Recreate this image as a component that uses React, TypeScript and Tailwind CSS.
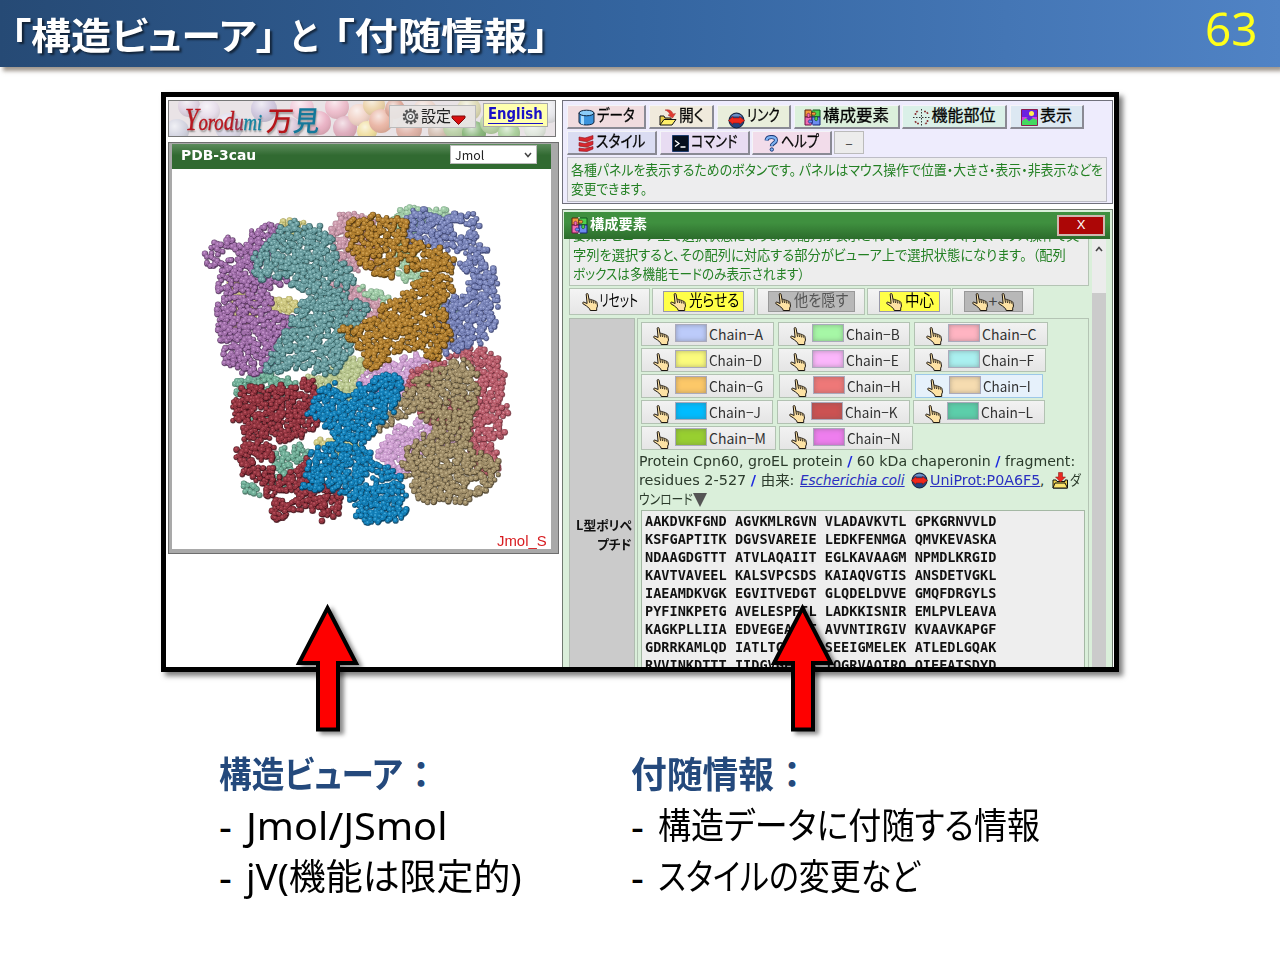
import { useLayoutEffect, useRef, type ReactNode } from "react";

/* Text squeezed or stretched horizontally to fill the width of its box. */
function Fit({ className, children }: { className: string; children: ReactNode }) {
  const box = useRef<HTMLSpanElement>(null);
  const text = useRef<HTMLSpanElement>(null);
  useLayoutEffect(() => {
    if (box.current && text.current) {
      text.current.style.transform = `scaleX(${box.current.clientWidth / text.current.offsetWidth})`;
    }
  });
  return (
    <span ref={box} className={`inline-block shrink-0 whitespace-nowrap ${className}`}>
      <span ref={text} className="inline-block origin-left whitespace-pre">
        {children}
      </span>
    </span>
  );
}

/* ---------- icons ---------- */

function Hand() {
  return (
    <svg width="18" height="18" viewBox="0 0 18 18" className="shrink-0">
      <path
        d="M5.2 1.2c0-.9 1.8-.9 1.9.1l.9 5.3c.4-.7 1.7-.5 2 .3.5-.5 1.7-.3 2 .6.6-.4 1.7 0 2 .8.9-.2 1.6.3 1.9 1.2l.6 3.6-.8 2v2.4H9.2l-.5-1.7-3.2-2.8-3.6-2.3c-.8-.9.2-1.9 1.2-1.5l3 1.3z"
        fill="#fde2a4"
        stroke="#1c1610"
        strokeWidth="1"
      />
      <path d="M8 6.6l.6 3.2M10 7l.5 3M12 7.6l.5 2.8M14 8.6l.4 2" stroke="#1c1610" strokeWidth=".9" fill="none" />
    </svg>
  );
}

function DbIcon() {
  return (
    <svg width="17" height="17" viewBox="0 0 17 17">
      <path d="M1 4v9c0 4 15 4 15 0V4z" fill="#3b93dc" stroke="#10243c" />
      <path d="M3 6v9l3 .8V7z" fill="#a5dcff" />
      <ellipse cx="8.5" cy="4" rx="7.5" ry="2.8" fill="#8accf7" stroke="#10243c" />
    </svg>
  );
}

function OpenIcon() {
  return (
    <svg width="18" height="17" viewBox="0 0 18 17">
      <path d="M1 16V7h4l1 2h6v2" fill="#e8cf4a" stroke="#111" />
      <path d="M1 16l4-5.5h12L13 16z" fill="#fff06a" stroke="#111" />
      <path d="M6 1c5-1 7 1 8 4l2.5-.5-3 4.5-4.5-3 2-.4C10 3 8.500 2 6 1z" fill="#e03a30" stroke="#a33" strokeWidth=".5" />
    </svg>
  );
}

function LinkIcon() {
  return (
    <svg width="17" height="17" viewBox="0 0 17 17" className="inline-block shrink-0">
      <circle cx="8.500" cy="8.500" r="7.500" fill="#24457f" stroke="#101c38" />
      <path d="M3 4.500c3-4 8-3.500 11 0z" fill="#6e8fc4" />
      <path d="M.5 8.500L5 4.500V6h6.500V4.500L16.500 8.500l-5 4V11H5v1.500z" fill="#f0281c" stroke="#8c0d0d" strokeWidth=".5" />
    </svg>
  );
}

function PuzzleIcon() {
  return (
    <svg width="17" height="17" viewBox="0 0 17 17" className="shrink-0">
      <path d="M1 1h7v7H1z" fill="#f39a3d" stroke="#5b2410" />
      <path d="M8 1h8v7H8z" fill="#4ed04e" stroke="#10521e" />
      <path d="M1 8h7v8H1z" fill="#f06bb0" stroke="#6b1444" />
      <path d="M8 8h8v8H8z" fill="#6c8cf0" stroke="#1a2578" />
      <path d="M7.500 3.500h1.500a1.600 1.600 0 1 1 0 2.400H7.500z" fill="#f39a3d" stroke="#5b2410" strokeWidth=".7" />
      <path d="M11 7.500V9a1.600 1.600 0 1 0 2.400 0V7.500z" fill="#4ed04e" stroke="#10521e" strokeWidth=".7" />
      <path d="M3.300 8.500V7a1.600 1.600 0 1 1 2.400 0v1.500z" fill="#f06bb0" stroke="#6b1444" strokeWidth=".7" />
      <path d="M8.500 11.300H7a1.600 1.600 0 1 0 0 2.400h1.500z" fill="#6c8cf0" stroke="#1a2578" strokeWidth=".7" />
      <path d="M7 0h2v1.500H7zM7 15.500h2V17H7z" fill="#fff" fillOpacity=".6" />
    </svg>
  );
}

function SiteIcon() {
  return (
    <svg width="17" height="17" viewBox="0 0 17 17">
      <path d="M8.500 0v17M0 8.500h17" stroke="#333" strokeDasharray="1.500 1.500" />
      <path d="M2.500 6V4L4 2.500h2M11 2.500h2L14.500 4v2M14.500 11v2L13 14.500h-2M6 14.500H4L2.500 13v-2" fill="none" stroke="#8c3a3a" strokeWidth="1.600" strokeDasharray="2 1" />
    </svg>
  );
}

function PictureIcon() {
  return (
    <svg width="17" height="17" viewBox="0 0 17 17">
      <path d="M.5.5h16v16H.5z" fill="#6a22e0" stroke="#8a1c50" />
      <path d="M1 8h15v4H1z" fill="#d13ee8" />
      <path d="M1 12l4-3 3 3 4-3 4 2v5H1z" fill="#43d860" />
      <path d="M5 9l3 3 4-3-3-2z" fill="#6528d8" />
      <circle cx="10.500" cy="4.500" r="2.500" fill="#fff050" />
    </svg>
  );
}

function StyleIcon() {
  return (
    <svg width="16" height="17" viewBox="0 0 16 17">
      <path d="M2 5l12 3M2 11l12 2" stroke="#b98" strokeWidth="1.600" fill="none" />
      <path d="M1 2l6 1 8-2.500v3.500L9 6.500 1 5.500zM1 7.500l6 1 8-2.500v3.500L9 12l-8-1zM1 13l6 .8 8-2.300V14l-6 2.500-8-.5z" fill="#d8262e" stroke="#8e1420" strokeWidth=".6" />
    </svg>
  );
}

function TermIcon() {
  return (
    <svg width="17" height="17" viewBox="0 0 17 17">
      <path d="M.5.5h16v16H.5z" fill="#06101e" stroke="#1d3c6c" />
      <path d="M3 5.500l4 3-4 3M8.500 12h5" fill="none" stroke="#fff" strokeWidth="1.300" />
    </svg>
  );
}

function HelpIcon() {
  return (
    <svg width="15" height="17" viewBox="0 0 15 17">
      <path d="M2.500 5.500C3 .8 12 .8 12 5.200c0 3-4.200 2.800-4.200 6" fill="none" stroke="#1d3a78" strokeWidth="4" />
      <path d="M2.500 5.300C3 1 12 1 12 5.200c0 3-4.200 2.800-4.200 5.500" fill="none" stroke="#7fb2f2" strokeWidth="2.300" />
      <circle cx="7.800" cy="14.500" r="1.700" fill="#7fb2f2" stroke="#1d3a78" />
    </svg>
  );
}

function GearIcon() {
  return (
    <svg width="17" height="17" viewBox="0 0 17 17" className="shrink-0">
      <circle cx="8.500" cy="8.500" r="6.500" fill="none" stroke="#555" strokeWidth="2.600" strokeDasharray="2.500 1.580" />
      <circle cx="8.500" cy="8.500" r="5" fill="#e6e6e6" stroke="#555" strokeWidth="1.300" />
      <circle cx="8.500" cy="8.500" r="2" fill="#fff" stroke="#555" strokeWidth="1.200" />
    </svg>
  );
}

function DownloadIcon() {
  return (
    <svg width="17" height="17" viewBox="0 0 17 17" className="inline-block shrink-0">
      <path d="M1 16V8h3l1 1.500h8V8h2.500v8z" fill="#f0d24c" stroke="#111" />
      <path d="M1 16l2-5h10l2.500 5z" fill="#fbe36c" stroke="#111" />
      <path d="M6.500.5h4V5h3L8.500 10l-5-5h3z" fill="#e82a22" stroke="#7d1010" strokeWidth=".5" />
    </svg>
  );
}

/* ---------- molecule ---------- */

type Blob = { tone: string; pts: string };

const tones: Record<string, [string, string, string]> = {
  yellow: ["#ece9b4", "#cfc982", "#a29b58"],
  pink: ["#e8c3d0", "#ca98aa", "#99707f"],
  mint: ["#cdebd1", "#9fcba6", "#739a7c"],
  lime: ["#dde6bd", "#bac890", "#909c68"],
  violet: ["#ecccec", "#cfa0d2", "#a078a5"],
  jade: ["#a5d6c3", "#6fae97", "#43705f"],
  rose: ["#dd94a0", "#b95d6b", "#75303c"],
  purple: ["#cfa0d6", "#a06eaa", "#56335e"],
  slate: ["#aab4e0", "#7984b9", "#3f4877"],
  teal: ["#a3cfd0", "#699c9f", "#2f595b"],
  amber: ["#dcae5e", "#b07e2f", "#563a0c"],
  maroon: ["#c35c68", "#93343f", "#47121a"],
  khaki: ["#cdbd96", "#9f8d68", "#544830"],
  azure: ["#51b4e2", "#127fb8", "#064467"],
};

const blobs: Blob[] = [
  { tone: "yellow", pts: "265,100 300,88 360,98 350,140 250,130" },
  { tone: "yellow", pts: "232,325 290,315 330,335 300,375 240,365" },
  { tone: "yellow", pts: "110,260 200,290 200,390 130,420" },
  { tone: "yellow", pts: "370,750 430,740 530,770 520,790 420,780" },
  { tone: "pink", pts: "425,110 450,72 500,68 560,85 560,240 470,240 430,200" },
  { tone: "pink", pts: "430,280 480,280 590,340 570,390 480,410 450,330" },
  { tone: "mint", pts: "608,70 640,48 700,55 780,60 780,90 650,130 680,230 715,255 700,275 640,275 630,230" },
  { tone: "mint", pts: "510,298 540,290 605,320 580,335 520,325" },
  { tone: "mint", pts: "730,340 800,330 810,370 740,375" },
  { tone: "lime", pts: "315,560 400,560 450,505 500,490 535,540 490,620 380,610" },
  { tone: "violet", pts: "505,560 560,530 680,490 740,500 740,540 640,620 510,605" },
  { tone: "violet", pts: "565,770 620,710 700,690 830,700 830,750 700,760 660,860 620,850 570,810" },
  { tone: "jade", pts: "133,575 240,550 290,560 325,590 250,620 140,610" },
  { tone: "jade", pts: "150,670 245,675 240,705 170,700" },
  { tone: "jade", pts: "250,790 330,750 360,790 300,835 255,845" },
  { tone: "jade", pts: "152,865 175,875 215,895 210,918 160,905" },
  { tone: "jade", pts: "230,860 300,850 280,895 240,890" },
  { tone: "rose", pts: "790,482 860,475 910,490 945,560 930,620 962,660 930,690 945,740 900,760 930,790 920,840 890,860 830,790 820,720 860,620 850,540" },
  { tone: "rose", pts: "640,610 670,530 790,500 730,600" },
  { tone: "rose", pts: "680,640 840,620 820,730 700,690" },
  { tone: "slate", pts: "650,75 700,50 760,85 790,55 860,80 870,110 855,160 890,175 885,220 915,240 918,400 880,450 830,468 740,500 745,370 760,340 830,290 850,260 780,220 820,220 840,190 740,170 650,160" },
  { tone: "purple", pts: "42,200 70,160 120,137 140,160 170,160 180,120 240,100 280,110 230,200 190,260 295,260 295,280 240,290 240,370 300,375 310,400 260,440 250,520 205,553 150,548 105,510 90,440 78,350 100,330 80,290 90,240 60,230" },
  { tone: "teal", pts: "250,120 310,90 400,120 430,150 440,200 495,240 495,290 440,330 540,340 535,370 500,400 475,500 430,550 380,553 360,530 250,550 215,540 260,460 300,400 330,330 370,310 310,300 300,260 190,270 190,190 240,150" },
  { tone: "amber", pts: "475,95 550,70 650,90 650,150 700,165 790,190 785,260 790,300 750,340 780,390 790,440 740,510 710,500 690,470 620,490 570,535 520,530 525,490 500,480 440,405 520,410 560,360 640,310 680,270 700,250 650,240 640,190 600,262 550,260 510,222 475,190" },
  { tone: "maroon", pts: "125,640 160,590 210,580 220,600 360,570 390,590 385,710 280,765 220,740 250,780 250,860 290,860 350,800 370,860 460,900 440,980 400,985 380,960 290,960 280,990 245,995 240,960 260,930 220,920 230,880 160,860 135,790 160,750 160,710 130,690" },
  { tone: "khaki", pts: "640,620 680,560 750,530 790,505 860,530 865,630 840,700 840,780 920,800 925,860 880,910 810,940 710,940 660,910 665,870 640,840 640,780 700,740 740,700 700,690 690,650 640,680 590,710 550,740 560,700 600,660" },
  { tone: "azure", pts: "345,670 400,585 430,580 460,620 540,570 600,545 635,570 630,640 580,690 520,760 560,820 600,825 645,870 640,920 655,940 640,980 560,1005 500,990 500,950 460,910 400,900 335,895 360,790 400,760 430,745 390,690" },
];

const gaps = [
  "72,205 105,180 135,173 140,200 100,212",
  "245,292 300,288 365,312 330,330 240,318",
  "785,108 808,92 850,112 830,130 795,130",
  "790,268 832,275 825,312 793,305",
  "505,228 540,250 600,268 640,262 640,290 605,318 540,288 505,270",
  "185,790 200,812 255,815 245,832 190,825",
  "340,728 385,712 400,745 350,755",
  "830,885 868,858 880,882 850,895",
  "175,432 208,436 200,456",
  "190,512 218,512 205,538",
  "515,870 545,850 538,890",
  "600,450 650,430 645,445 610,462",
  "285,490 310,480 290,508",
  "480,470 520,490 510,510",
  "530,835 575,850 560,870",
  "870,700 910,692 900,718",
  "842,402 872,398 865,420",
  "255,910 300,905 320,925 270,930",
];

const parse = (s: string) => s.split(" ").map((p) => p.split(",").map(Number) as [number, number]);

function inside(x: number, y: number, poly: [number, number][]) {
  let hit = false;
  for (let i = 0, j = poly.length - 1; i < poly.length; j = i++) {
    const [xi, yi] = poly[i];
    const [xj, yj] = poly[j];
    if (yi > y !== yj > y && x < ((xj - xi) * (y - yi)) / (yj - yi) + xi) hit = !hit;
  }
  return hit;
}

type Atom = { x: number; y: number; r: number };

/* Each chain is a dark silhouette of atoms with lit atoms scattered over it. */
function makeChains() {
  let seed = 20117;
  const rnd = () => {
    seed = (seed * 1664525 + 1013904223) % 4294967296;
    return seed / 4294967296;
  };
  const holes = gaps.map(parse);
  return blobs.map((b) => {
    const poly = parse(b.pts);
    const xs = poly.map((p) => p[0]);
    const ys = poly.map((p) => p[1]);
    const list: Atom[] = [];
    for (let y = Math.min(...ys) - 4; y <= Math.max(...ys) + 4; y += 10) {
      for (let x = Math.min(...xs) - 4; x <= Math.max(...xs) + 4; x += 10) {
        const px = x + (rnd() - 0.5) * 17;
        const py = y + (rnd() - 0.5) * 17;
        const tx = px + (rnd() - 0.5) * 16;
        const ty = py + (rnd() - 0.5) * 16;
        if (rnd() > 0.04 && inside(tx, ty, poly) && !holes.some((h) => inside(px, py, h))) {
          list.push({ x: Math.round(px), y: Math.round(py), r: 5.5 + rnd() * 3 });
        }
      }
    }
    list.sort(() => rnd() - 0.5);
    return { tone: b.tone, list };
  });
}

const chains = makeChains();

function Molecule() {
  return (
    <svg width="379" height="380" viewBox="-54 -63 1137 1140" className="block">
      <defs>
        {Object.entries(tones).map(([name, [hi, mid, lo]]) => (
          <radialGradient key={name} id={`atom-${name}`} cx=".45" cy=".38" r=".62">
            <stop offset="0" stopColor={hi} />
            <stop offset=".45" stopColor={mid} />
            <stop offset=".8" stopColor={mid} />
            <stop offset="1" stopColor={lo} />
          </radialGradient>
        ))}
      </defs>
      {chains.map((c, i) => (
        <g key={i}>
          <g fill={tones[c.tone][2]} fillOpacity=".85">
            {c.list.map((a, k) => (
              <circle key={k} cx={a.x + 1} cy={a.y + 1} r={a.r + 2} />
            ))}
          </g>
          <g fill={`url(#atom-${c.tone})`}>
            {c.list.map((a, k) => (
              <circle key={k} cx={a.x} cy={a.y} r={a.r} />
            ))}
          </g>
        </g>
      ))}
    </svg>
  );
}

/* ---------- left column ---------- */

const bubbles: [number, number, number, string][] = [
  [8, 30, 12, "#cfd0de"], [20, 5, 11, "#dccfe0"], [95, 8, 13, "#cdc4dc"], [60, 26, 14, "#dad7e8"], [40, 10, 11, "#e6dcea"], [120, 28, 12, "#d8c0d4"],
  [133, 7, 12, "#f0c8d8"], [150, 22, 12, "#e8acc0"], [168, 6, 12, "#ecb8c8"], [176, 27, 12, "#dca6b8"], [190, 14, 11, "#f0d0c4"],
  [205, 4, 11, "#ead0a4"], [198, 30, 10, "#efdc98"], [212, 20, 12, "#e8b09e"], [226, 8, 10, "#d8a090"], [240, 28, 13, "#dcaca0"],
  [256, 10, 12, "#ead2c8"], [270, 30, 11, "#cfb8aa"], [286, 26, 12, "#b8cfa4"], [300, 8, 12, "#dcd8b0"], [305, 32, 12, "#7fb070"],
  [322, 22, 11, "#b4d0a0"], [340, 32, 11, "#a4cc94"], [352, 10, 12, "#d6e4cc"], [366, 28, 11, "#dfe6dc"], [380, 10, 12, "#e4e4e8"],
];

function Banner() {
  return (
    <div className="relative h-[37px] w-[388px] overflow-hidden border border-[#777] bg-[#e9e3e6]">
      <svg width="386" height="35" viewBox="0 0 386 35" className="block">
        <defs>
          <radialGradient id="shine" cx=".4" cy=".3" r=".7">
            <stop offset="0" stopColor="#fff" stopOpacity=".7" />
            <stop offset=".6" stopColor="#fff" stopOpacity=".1" />
            <stop offset="1" stopColor="#554" stopOpacity=".14" />
          </radialGradient>
        </defs>
        {bubbles.map(([x, y, r, c], i) => (
          <g key={i}>
            <circle cx={x} cy={y} r={r} fill={c} />
            <circle cx={x} cy={y} r={r} fill="url(#shine)" />
          </g>
        ))}
      </svg>
      <div className="absolute inset-0 flex items-start">
        <div className="ml-[16px] flex h-[36px] items-center font-['Liberation_Serif',serif] text-[24px] italic leading-none text-[#b81820] [-webkit-text-stroke:0.4px] [text-shadow:1px_2px_2px_#888]">
          <Fit className="w-[77px]">
            <span className="text-[31px]">Y</span>oro<span className="text-[27px]">d</span>
            <span className="text-[#a03048]">u</span>
            <span className="text-[#1583a0]">mi</span>
          </Fit>
        </div>
        <div className="ml-[5px] mt-[1px] -skew-x-6 text-[28px] font-medium leading-[34px] [text-shadow:1px_2px_2px_#999]">
          <Fit className="w-[53px]">
            <span className="text-[#b5151a]">万</span>
            <span className="text-[#14789a]">見</span>
          </Fit>
        </div>
        <div className="ml-[69px] mt-[4px] flex h-[23px] w-[87px] items-center border border-[#bbb] bg-[#e8e5e4]/95 pl-[12px] text-[16px]">
          <GearIcon />
          <Fit className="ml-[2px] -mt-[4px] w-[30px] leading-none text-[#222]">設定</Fit>
          <svg width="15" height="10" viewBox="0 0 15 10" className="mt-[7px]">
            <path d="M1 1h13v2L7.500 9.500 1 3z" fill="#d80f0f" stroke="#7a0d0d" />
          </svg>
        </div>
        <div className="ml-[7px] mt-[2px] flex h-[24px] w-[65px] items-center justify-center border border-[#aaa] bg-[#ffffae] font-['DejaVu_Sans',sans-serif] text-[15px] font-bold text-[#1a10c8]">
          <Fit className="w-[55px] border-b border-[#1a10c8] leading-[17px]">English</Fit>
        </div>
      </div>
    </div>
  );
}

function Viewer() {
  return (
    <div className="mt-[5px] h-[412px] w-[391px] border border-[#6e6e6e] bg-[#a9a9a9] pl-[3px] pt-px">
      <div className="flex h-[25px] w-[379px] items-start bg-linear-to-b from-[#5c8c5c] via-[#316a31] via-45% to-[#316a31] pl-[9px]">
        <Fit className="mt-[2px] w-[75px] font-['DejaVu_Sans',sans-serif] text-[13.500px] font-bold leading-[18px] text-white">PDB-3cau</Fit>
        <div className="ml-[194px] mt-px flex h-[19px] w-[87px] items-center justify-between border border-[#bbb] bg-white pl-[4px] pr-[4px]">
          <Fit className="w-[29px] text-[12px] leading-none text-[#222]">Jmol</Fit>
          <svg width="8" height="6" viewBox="0 0 8 6">
            <path d="M1 1l3 3.500L7 1" fill="none" stroke="#444" strokeWidth="1.500" />
          </svg>
        </div>
      </div>
      <div className="relative h-[380px] w-[379px] bg-white">
        <Molecule />
        <div className="absolute bottom-[-1px] right-[4px] font-['Liberation_Sans',sans-serif] text-[14px] leading-[18px] text-[#d81c20]">
          <Fit className="w-[50px]">Jmol_S</Fit>
        </div>
      </div>
    </div>
  );
}

/* ---------- right column ---------- */

function ToolButton({ size, text, tint, icon, label }: { size: string; text: string; tint: string; icon: ReactNode; label: string }) {
  return (
    <div className={`flex h-[24px] shrink-0 items-center justify-center border-b-2 border-l border-r-2 border-t border-b-[#8a8a94] border-l-[#f4f4f8] border-r-[#8a8a94] border-t-[#f4f4f8] ${size} ${tint}`}>
      <span className="mt-[2px]">{icon}</span>
      <Fit className={`-mt-[5px] ml-[2px] text-[16px] leading-[20px] [-webkit-text-stroke:0.3px_#111] ${text}`}>{label}</Fit>
    </div>
  );
}

function ToolPanel() {
  return (
    <div className="flex h-[104px] w-[551px] flex-col border border-[#71717c] bg-[#eeecfd] pl-[4px] pt-[4px]">
      <div className="flex">
        <ToolButton size="w-[79px]" text="w-[38px]" tint="bg-[#f0dcdf]" icon={<DbIcon />} label="データ" />
        <ToolButton size="w-[65px] ml-[3px]" text="w-[25px]" tint="bg-[#f0eadc]" icon={<OpenIcon />} label="開く" />
        <ToolButton size="w-[74px] ml-[3px]" text="w-[33px]" tint="bg-[#e9eedb]" icon={<LinkIcon />} label="リンク" />
        <ToolButton size="w-[106px] ml-[3px]" text="w-[66px]" tint="bg-[#dcf0dc]" icon={<PuzzleIcon />} label="構成要素" />
        <ToolButton size="w-[105px] ml-[2px]" text="w-[64px]" tint="bg-[#daf0e8]" icon={<SiteIcon />} label="機能部位" />
        <ToolButton size="w-[74px] ml-[3px]" text="w-[32px]" tint="bg-[#dce8f2]" icon={<PictureIcon />} label="表示" />
      </div>
      <div className="mt-[2px] flex">
        <ToolButton size="w-[90px]" text="w-[49px]" tint="bg-[#dadcf2]" icon={<StyleIcon />} label="スタイル" />
        <ToolButton size="w-[90px] ml-[3px]" text="w-[46px]" tint="bg-[#e8dcf2]" icon={<TermIcon />} label="コマンド" />
        <ToolButton size="w-[80px] ml-[2px]" text="w-[38px]" tint="bg-[#f2dcea]" icon={<HelpIcon />} label="ヘルプ" />
        <div className="ml-[2px] flex h-[23px] w-[30px] items-center justify-center border border-[#bbb] bg-[#ececec] text-[14px] text-[#444]">–</div>
      </div>
      <div className="mt-[2px] h-[45px] w-[540px] border border-[#bdbdc6] bg-[#ededee] pl-[3px] pt-[2px] text-[14px] leading-[19px] text-[#238023]">
        <Fit className="block h-[19px] w-[532px]">各種パネルを表示するためのボタンです。 パネルはマウス操作で位置・大きさ・表示・非表示などを</Fit>
        <Fit className="block h-[19px] w-[76px]">変更できます。</Fit>
      </div>
    </div>
  );
}

function ActionButton({ size, inner, children }: { size: string; inner: string; children: ReactNode }) {
  return (
    <div className={`flex h-[27px] shrink-0 items-center justify-center border border-[#b4c4b4] bg-linear-to-b from-[#f4f4f4] to-[#e6e6e6] ${size}`}>
      <div className={`flex h-[21px] items-center justify-center text-[16px] ${inner}`}>{children}</div>
    </div>
  );
}

function Chain({ name, size, fill, text, active }: { name: string; size: string; fill: string; text: string; active?: boolean }) {
  return (
    <div
      className={`flex h-[24px] shrink-0 items-center border pl-[10px] ${size} ${
        active ? "border-[#9cc8e8] bg-[#e6f1fb]" : "border-[#b2c2b2] bg-linear-to-b from-[#f2f2f2] to-[#e5e5e5]"
      }`}
    >
      <span className="mt-[3px]">
        <Hand />
      </span>
      <span className={`-mt-[2px] ml-[5px] h-[18px] w-[32px] shrink-0 border border-[#aab] shadow-[inset_0_0_5px_rgba(90,90,90,0.45)] ${fill}`} />
      <Fit className={`-mt-px ml-[2px] text-[14px] leading-none text-[#333] ${text}`}>{`Chain−${name}`}</Fit>
    </div>
  );
}

const sequence = [
  "AAKDVKFGND AGVKMLRGVN VLADAVKVTL GPKGRNVVLD",
  "KSFGAPTITK DGVSVAREIE LEDKFENMGA QMVKEVASKA",
  "NDAAGDGTTT ATVLAQAIIT EGLKAVAAGM NPMDLKRGID",
  "KAVTVAVEEL KALSVPCSDS KAIAQVGTIS ANSDETVGKL",
  "IAEAMDKVGK EGVITVEDGT GLQDELDVVE GMQFDRGYLS",
  "PYFINKPETG AVELESPFIL LADKKISNIR EMLPVLEAVA",
  "KAGKPLLIIA EDVEGEALAT AVVNTIRGIV KVAAVKAPGF",
  "GDRRKAMLQD IATLTGGTVI SEEIGMELEK ATLEDLGQAK",
  "RVVINKDTTT IIDGVGEEAA IQGRVAQIRQ QIEEATSDYD",
];

function Description() {
  const slash = <b className="text-[#1c28e0]">/</b>;
  return (
    <div className="ml-[-2px] font-['DejaVu_Sans','Noto_Sans_CJK_JP',sans-serif] text-[13.500px] leading-[19px] text-[#2b3a2b]">
      <div className="flex h-[19px]">
        <Fit className="w-[436px]">Protein Cpn60, groEL protein {slash} 60 kDa chaperonin {slash} fragment:</Fit>
      </div>
      <div className="flex h-[19px] items-center">
        <Fit className="w-[155px]">residues 2-527 {slash} 由来:</Fit>
        <Fit className="ml-[6px] w-[105px] italic text-[#2a30c0]">
          <u>Escherichia coli</u>
        </Fit>
        <span className="ml-[6px] flex">
          <LinkIcon />
        </span>
        <Fit className="ml-[2px] w-[110px] text-[#2a30c0]">
          <u>UniProt:P0A6F5</u>
        </Fit>
        <span>,</span>
        <span className="ml-[8px] flex">
          <DownloadIcon />
        </span>
        <Fit className="ml-px w-[11px] text-[14px]">ダ</Fit>
      </div>
      <div className="flex h-[19px] items-center">
        <Fit className="w-[54px] text-[14px]">ウンロード</Fit>
        <svg width="14" height="14" viewBox="0 0 14 14">
          <path d="M0 0h14L7 14z" fill="#555" />
        </svg>
      </div>
    </div>
  );
}

function ComponentPanel() {
  return (
    <div className="mt-[5px] flex h-[460px] w-[551px] flex-col overflow-hidden border border-b-0 border-[#6f7a6f] bg-[#daefda] pl-px pt-[2px]">
      <div className="flex h-[27px] w-[546px] shrink-0 items-center bg-linear-to-b from-[#3f903f] via-[#3f903f] via-40% to-[#2c6c2c] pl-[7px]">
        <PuzzleIcon />
        <Fit className="-mt-[5px] ml-[2px] w-[57px] text-[14px] font-bold leading-none text-white">構成要素</Fit>
        <div className="ml-auto mr-[5px] mt-[-1px] flex h-[21px] w-[48px] items-center justify-center border-2 border-[#d0b8b0] bg-[#ac0606] font-['Liberation_Sans',sans-serif] text-[13px] text-white">X</div>
      </div>
      <div className="flex flex-1">
        <div className="ml-[5px] w-[520px] shrink-0">
          <div className="flex h-[47px] flex-col overflow-hidden border border-t-0 border-[#b4c4b4] bg-[#ededed] pl-[3px] text-[14px] leading-[19px] text-[#238023]">
            <div className="-mt-[14px] mb-px h-[19px]">
              <Fit className="w-[506px]">要素がビューア上で選択状態になります。配列が表示されているボックス内で、マウス操作で文</Fit>
            </div>
            <div className="h-[19px]">
              <Fit className="w-[493px]">字列を選択すると、その配列に対応する部分がビューア上で選択状態になります。  （配列</Fit>
            </div>
            <div className="h-[19px]">
              <Fit className="w-[232px]">ボックスは多機能モードのみ表示されます）</Fit>
            </div>
          </div>
          <div className="mt-[2px] flex">
            <ActionButton size="w-[81px]" inner="">
              <Hand />
              <Fit className="-mt-[5px] w-[39px] leading-none">リセット</Fit>
            </ActionButton>
            <ActionButton size="w-[103px] ml-[2px]" inner="w-[81px] border border-[#99a] bg-[#ffff48]">
              <Hand />
              <Fit className="-mt-[6px] ml-[2px] w-[50px] leading-none">光らせる</Fit>
            </ActionButton>
            <ActionButton size="w-[108px] ml-[2px]" inner="w-[87px] border border-[#999] bg-[#b8b8b8]">
              <Hand />
              <Fit className="-mt-[6px] ml-[2px] w-[54px] leading-none text-[#555]">他を隠す</Fit>
            </ActionButton>
            <ActionButton size="w-[84px] ml-[2px]" inner="w-[61px] border border-[#99a] bg-[#ffff48]">
              <Hand />
              <Fit className="-mt-[6px] ml-[2px] w-[29px] leading-none">中心</Fit>
            </ActionButton>
            <ActionButton size="w-[82px] ml-px" inner="w-[59px] border border-[#999] bg-[#b8b8b8] text-[#444]">
              <Hand />
              <span className="-mt-[4px] leading-none">+</span>
              <Hand />
            </ActionButton>
          </div>
          <div className="mt-[3px] flex">
            <div className="h-[360px] w-[66px] border border-[#b0bcb0] bg-[#cbcbcb] pt-[196px] text-[13px] font-bold leading-[19px] text-[#111]">
              <div className="flex justify-end pr-[2px]">
                <Fit className="w-[56px]">L型ポリペ</Fit>
              </div>
              <div className="flex justify-end pr-[2px]">
                <Fit className="w-[35px]">プチド</Fit>
              </div>
            </div>
            <div className="ml-[2px] h-[360px] w-[452px] border border-[#b4c4b4] pl-[3px] pt-[3px]">
              <div className="flex flex-col gap-[2px]">
                <div className="flex">
                  <Chain name="A" size="w-[133px]" text="w-[54px]" fill="bg-[#bccbfa]" />
                  <Chain name="B" size="w-[132px] ml-[4px]" text="w-[54px]" fill="bg-[#a6f7a6]" />
                  <Chain name="C" size="w-[134px] ml-[4px]" text="w-[54px]" fill="bg-[#ffb4c2]" />
                </div>
                <div className="flex">
                  <Chain name="D" size="w-[132px]" text="w-[53px]" fill="bg-[#fbfb7c]" />
                  <Chain name="E" size="w-[132px] ml-[5px]" text="w-[53px]" fill="bg-[#fbb6fb]" />
                  <Chain name="F" size="w-[132px] ml-[4px]" text="w-[52px]" fill="bg-[#aaf0f0]" />
                </div>
                <div className="flex">
                  <Chain name="G" size="w-[133px]" text="w-[54px]" fill="bg-[#fcc868]" />
                  <Chain name="H" size="w-[133px] ml-[5px]" text="w-[54px]" fill="bg-[#ee7878]" />
                  <Chain name="I" size="w-[128px] ml-[3px]" text="w-[48px]" fill="bg-[#f6dcb0]" active />
                </div>
                <div className="flex">
                  <Chain name="J" size="w-[132px]" text="w-[52px]" fill="bg-[#00bcff]" />
                  <Chain name="K" size="w-[133px] ml-[4px]" text="w-[53px]" fill="bg-[#cb5252]" />
                  <Chain name="L" size="w-[132px] ml-[3px]" text="w-[52px]" fill="bg-[#5cceaa]" />
                </div>
                <div className="flex">
                  <Chain name="M" size="w-[135px]" text="w-[57px]" fill="bg-[#98cf30]" />
                  <Chain name="N" size="w-[134px] ml-[3px]" text="w-[54px]" fill="bg-[#ee7eee]" />
                </div>
              </div>
              <div className="mt-[2px]">
                <Description />
              </div>
              <div className="mt-px w-[444px] border border-[#a4b8a4] bg-[#eeeeee] pl-[3px] pt-px font-['DejaVu_Sans_Mono',monospace] text-[14.500px] font-bold leading-[18px] text-[#111]">
                {sequence.map((line) => (
                  <Fit key={line} className="block h-[18px] w-[351px]">
                    {line}
                  </Fit>
                ))}
              </div>
            </div>
          </div>
        </div>
        <div className="ml-[3px] flex w-[14px] flex-col items-center bg-[#ececec]">
          <svg width="8" height="6" viewBox="0 0 8 6" className="mt-[7px]">
            <path d="M1 5l3-3.500L7 5" fill="none" stroke="#444" strokeWidth="1.600" />
          </svg>
          <div className="mt-[41px] w-full flex-1 bg-[#cbcbcb]" />
        </div>
      </div>
    </div>
  );
}

function Arrow({ place }: { place: string }) {
  return (
    <svg width="72" height="136" viewBox="0 0 72 136" className={`absolute drop-shadow-[4px_3px_2px_rgba(0,0,0,0.45)] ${place}`}>
      <path d="M34.500 6L63 61H45v66.500H25V61H6z" fill="#fe0000" stroke="#000" strokeWidth="4" />
    </svg>
  );
}

function Note({ width, children }: { width: string; children: string }) {
  return (
    <div className="flex h-[51px]">
      <span className="w-[27px] shrink-0 text-[40px]">-</span>
      <Fit className={width}>{children}</Fit>
    </div>
  );
}

export default function App() {
  return (
    <div className="relative flex h-[960px] w-[1280px] flex-col overflow-hidden bg-white font-['Noto_Sans_CJK_JP',sans-serif] text-black [font-feature-settings:'palt']">
      <header className="flex h-[67px] shrink-0 items-start justify-between bg-linear-to-r from-[#264a75] via-[#3465a0] via-50% to-[#5083c5] shadow-[3px_4px_4px_rgba(80,65,50,0.55)]">
        <h1 className="ml-[11px] mt-[11px] flex text-[37px] font-bold leading-[46px] text-white [text-shadow:2px_2px_2px_rgba(0,0,0,0.55)]">
          <Fit className="w-[265px]">「構造ビューア」</Fit>
          <Fit className="ml-[14px] w-[28px]">と</Fit>
          <Fit className="ml-[15px] w-[216px]">「付随情報」</Fit>
        </h1>
        <div className="mr-[23px] mt-[-1px] font-['Noto_Sans',sans-serif] text-[45px] leading-[60px] text-[#ffff1a]">
          <Fit className="w-[52px]">63</Fit>
        </div>
      </header>

      <main className="ml-[161px] mt-[25px] flex h-[580px] w-[958px] shrink-0 overflow-hidden border-[5px] border-black bg-white shadow-[4px_4px_5px_rgba(0,0,0,0.5)]">
        <div className="w-[396px] shrink-0 pl-[2px] pt-[3px]">
          <Banner />
          <Viewer />
        </div>
        <div className="w-[552px] shrink-0 pt-[3px]">
          <ToolPanel />
          <ComponentPanel />
        </div>
      </main>

      <section className="ml-[219px] mt-[77px] flex font-['Noto_Sans','Noto_Sans_CJK_JP',sans-serif] text-[36px] leading-[51px]">
        <div className="flex w-[412px] flex-col">
          <div className="flex h-[51px] font-bold text-[#24497c]">
            <Fit className="w-[184px]">構造ビューア</Fit>
            <span className="[font-feature-settings:normal]">：</span>
          </div>
          <div className="h-[51px] text-[38px]">
            <Note width="w-[201px]">Jmol/JSmol</Note>
          </div>
          <Note width="w-[276px]">jV(機能は限定的)</Note>
        </div>
        <div className="flex flex-col">
          <div className="flex h-[51px] font-bold text-[#24497c]">
            <Fit className="w-[143px]">付随情報</Fit>
            <span className="[font-feature-settings:normal]">：</span>
          </div>
          <Note width="w-[382px]">構造データに付随する情報</Note>
          <Note width="w-[262px]">スタイルの変更など</Note>
        </div>
      </section>

      <Arrow place="left-[293px] top-[602px]" />
      <Arrow place="left-[768px] top-[602px]" />
    </div>
  );
}
